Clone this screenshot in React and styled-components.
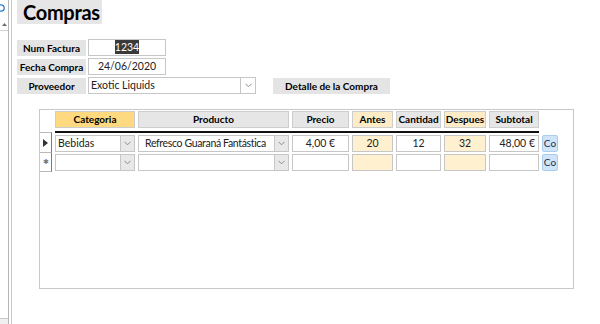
import React from 'react';
import styled, { createGlobalStyle } from 'styled-components';

const GlobalStyle = createGlobalStyle`
  html, body {
    margin: 0;
    padding: 0;
    background: #ffffff;
  }
  body {
    font-family: Lato, "Liberation Sans", sans-serif;
    color: #000;
  }
`;

const columns = [
  { key: 'cat', label: 'Categoria', tone: 'gold', combo: true },
  { key: 'prod', label: 'Producto', tone: 'gray', combo: true },
  { key: 'precio', label: 'Precio', tone: 'gray' },
  { key: 'antes', label: 'Antes', tone: 'cream' },
  { key: 'cant', label: 'Cantidad', tone: 'gray' },
  { key: 'desp', label: 'Despues', tone: 'cream' },
  { key: 'sub', label: 'Subtotal', tone: 'gray' },
];

const rows = [
  { marker: 'current', cat: 'Bebidas', prod: 'Refresco Guaraná Fantástica', precio: '4,00 €', antes: '20', cant: '12', desp: '32', sub: '48,00 €' },
  { marker: 'new' },
];

const headerBg = { gold: '#ffd97f', gray: '#e6e6e6', cream: '#fdecc6' };
const cellBg = { gold: '#ffffff', gray: '#ffffff', cream: '#fff1cf' };
const align = { precio: 'center', antes: 'center', cant: 'center', desp: 'center', sub: 'right' };

const Chevron = () => (
  <svg width="7" height="5" viewBox="0 0 7 5">
    <path d="M0.5 0.8 L3.5 3.8 L6.5 0.8" fill="none" stroke="#8a8a8a" strokeWidth="1" />
  </svg>
);

const App = () => (
  <>
    <GlobalStyle />
    <Page>
      <Sidebar>
        <SideIcon>
          <svg width="9" height="10" viewBox="0 0 9 10">
            <circle cx="3" cy="5" r="3.2" fill="none" stroke="#2f7fd3" strokeWidth="1.3" />
          </svg>
        </SideIcon>
        <ScrollUp>
          <svg width="7" height="5" viewBox="0 0 7 5">
            <path d="M1 4 L3.5 1 L6 4 Z" fill="#6b6b6b" />
          </svg>
        </ScrollUp>
        <SideFill />
        <SideFoot />
      </Sidebar>
      <Main>
        <Title>Compras</Title>
        <Form>
          <FieldRow>
            <Label>Num Factura</Label>
            <Input $w={78} $center>
              <Selected>1234</Selected>
            </Input>
          </FieldRow>
          <FieldRow>
            <Label>Fecha Compra</Label>
            <Input $w={78} $center>24/06/2020</Input>
          </FieldRow>
          <FieldRow>
            <Label>Proveedor</Label>
            <Combo $w={168}>
              <ComboText>Exotic Liquids</ComboText>
              <ComboButton $big>
                <Chevron />
              </ComboButton>
            </Combo>
            <SectionLabel>Detalle de la Compra</SectionLabel>
          </FieldRow>
        </Form>

        <Subform>
          <Grid>
            <span />
            {columns.map((c) => (
              <HeadCell key={c.key} $tone={c.tone}>
                {c.label}
              </HeadCell>
            ))}
            <span />
            <Rule />
            {rows.map((r, i) => (
              <React.Fragment key={i}>
                <Selector $first={i === 0}>
                  {r.marker === 'current' ? (
                    <svg width="5" height="8" viewBox="0 0 5 8">
                      <path d="M0 0 L5 4 L0 8 Z" fill="#333" />
                    </svg>
                  ) : (
                    <Star>✱</Star>
                  )}
                </Selector>
                {columns.map((c) =>
                  c.combo ? (
                    <Combo key={c.key} $grid>
                      <ComboText $pad={c.key === 'prod' ? 6 : 2} $tight={c.key === 'prod'}>
                        {r[c.key] || ''}
                      </ComboText>
                      <ComboButton>
                        <Chevron />
                      </ComboButton>
                    </Combo>
                  ) : (
                    <Cell key={c.key} $tone={c.tone} $align={align[c.key]}>
                      {r[c.key] || ''}
                    </Cell>
                  )
                )}
                <CoButton>Co</CoButton>
              </React.Fragment>
            ))}
          </Grid>
        </Subform>
      </Main>
    </Page>
  </>
);

const Page = styled.div`
  display: flex;
  width: 600px;
  height: 324px;
  overflow: hidden;
  background: #fff;
`;

const Sidebar = styled.div`
  width: 8px;
  display: flex;
  flex-direction: column;
  border-right: 1px solid #b4b4b4;
`;

const SideIcon = styled.div`
  height: 16px;
  display: flex;
  align-items: center;
  margin-left: -2px;
  overflow: hidden;
`;

const ScrollUp = styled.div`
  height: 11px;
  margin-top: 3px;
  display: flex;
  align-items: center;
  justify-content: center;
  border-bottom: 1px solid #d0d0d0;
`;

const SideFill = styled.div`
  flex: 1;
`;

const SideFoot = styled.div`
  height: 5px;
  border-top: 1px solid #c8c8c8;
  background: #f0f0f0;
`;

const Main = styled.div`
  flex: 1;
  margin-left: 2px;
  border-left: 1px solid #c8c8c8;
  padding-left: 5px;
`;

const Title = styled.div`
  width: 85px;
  height: 24px;
  box-sizing: border-box;
  padding-left: 6px;
  background: #e6e6e6;
  font-weight: 700;
  font-size: 20px;
  letter-spacing: -0.3px;
  line-height: 24px;
`;

const Form = styled.div`
  display: flex;
  flex-direction: column;
  gap: 2px;
  margin-top: 15px;
`;

const FieldRow = styled.div`
  display: flex;
  align-items: center;
  gap: 2px;
  height: 17px;
`;

const Label = styled.div`
  width: 69px;
  height: 16px;
  background: #e4e4e4;
  font-weight: 700;
  font-size: 10px;
  line-height: 16px;
  text-align: center;
  white-space: nowrap;
`;

const SectionLabel = styled(Label)`
  width: 117px;
  margin-left: 15px;
`;

const Input = styled.div`
  width: ${(p) => p.$w}px;
  height: 17px;
  box-sizing: border-box;
  border: 1px solid #c6c6c6;
  background: #fff;
  font-size: 10.5px;
  line-height: 15px;
  text-align: ${(p) => (p.$center ? 'center' : 'left')};
  color: #222;
  white-space: nowrap;
`;

const Selected = styled.span`
  background: #3a3a3a;
  color: #fff;
  padding: 1px 0;
`;

const Combo = styled.div`
  width: ${(p) => (p.$w ? `${p.$w}px` : 'auto')};
  height: 17px;
  margin: ${(p) => (p.$grid ? '1px 0' : '0')};
  box-sizing: border-box;
  border: 1px solid #c6c6c6;
  background: #fff;
  display: flex;
  font-size: 10.5px;
  color: #222;
  min-width: 0;
`;

const ComboText = styled.div`
  flex: 1;
  min-width: 0;
  padding-left: ${(p) => (p.$pad != null ? p.$pad : 2)}px;
  letter-spacing: ${(p) => (p.$tight ? '-0.35px' : '0')};
  line-height: 15px;
  white-space: nowrap;
  overflow: hidden;
`;

const ComboButton = styled.div`
  flex: none;
  width: ${(p) => (p.$big ? 14 : 13)}px;
  border-left: 1px solid #c6c6c6;
  background: ${(p) => (p.$big ? '#fff' : '#e8e8e8')};
  display: flex;
  align-items: center;
  justify-content: center;
`;

const Subform = styled.div`
  margin: 15px 0 0 22px;
  width: 535px;
  height: 180px;
  box-sizing: border-box;
  border: 1px solid #c8c8c8;
  padding-top: 1px;
`;

const Grid = styled.div`
  display: grid;
  grid-template-columns: 12px 80px 151px 57px 41px 45px 42px 50px 16px;
  grid-template-rows: 17px 6px 19px 19px;
  column-gap: 3px;
`;

const HeadCell = styled.div`
  background: ${(p) => headerBg[p.$tone]};
  border: 1px solid #cdcdcd;
  box-sizing: border-box;
  font-weight: 700;
  font-size: 10px;
  line-height: 15px;
  text-align: center;
  white-space: nowrap;
`;

const Rule = styled.div`
  grid-column: 1 / -1;
  align-self: center;
  height: 2px;
  background: #111;
  margin: 2px 19px 0 15px;
`;

const Selector = styled.div`
  border-right: 1px solid #7a7a7a;
  border-bottom: 1px solid #b8b8b8;
  border-top: ${(p) => (p.$first ? '1px solid #b8b8b8' : 'none')};
  margin-top: ${(p) => (p.$first ? '-2px' : '0')};
  display: flex;
  align-items: flex-start;
  justify-content: center;
  padding-top: ${(p) => (p.$first ? 6 : 4)}px;
  box-sizing: border-box;
`;

const Star = styled.span`
  font-size: 7px;
  line-height: 8px;
  color: #777;
`;

const Cell = styled.div`
  margin: 1px 0;
  box-sizing: border-box;
  border: 1px solid #c6c6c6;
  background: ${(p) => cellBg[p.$tone]};
  font-size: 10.5px;
  line-height: 15px;
  text-align: ${(p) => p.$align};
  padding: 0 3px;
  color: #222;
  white-space: nowrap;
`;

const CoButton = styled.div`
  margin: 1px 0;
  box-sizing: border-box;
  background: #cfe4f8;
  border: 1px solid #a9cdee;
  border-radius: 2px;
  font-size: 10px;
  line-height: 15px;
  text-align: center;
  color: #1d2f4a;
`;

export default App;
